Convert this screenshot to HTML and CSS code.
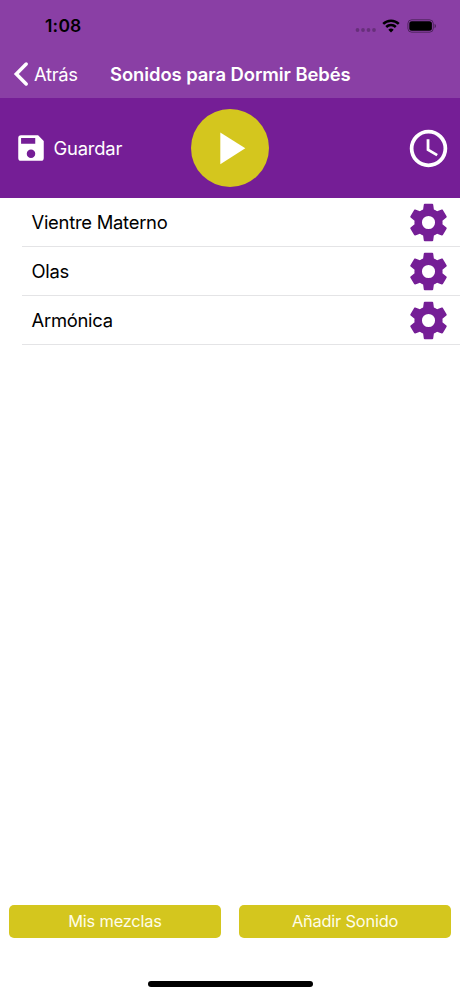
FILE: index.html
```html
<!DOCTYPE html>
<html lang="es">
<head>
<meta charset="utf-8">
<title>Sonidos para Dormir Bebés</title>
<link rel="stylesheet" href="styles.css">
</head>
<body>
<svg width="0" height="0" class="defs" aria-hidden="true">
  <symbol id="gear" viewBox="0 0 24 24"><path d="M12 15.5A3.5 3.5 0 0 1 8.5 12 3.5 3.5 0 0 1 12 8.5a3.5 3.5 0 0 1 3.5 3.5 3.5 3.5 0 0 1-3.5 3.5m7.43-2.53c.04-.32.07-.64.07-.97s-.03-.66-.07-1l2.11-1.63c.19-.15.24-.42.12-.64l-2-3.46c-.12-.22-.39-.31-.61-.22l-2.49 1c-.52-.39-1.06-.73-1.69-.98l-.37-2.65A.506.506 0 0 0 14 2h-4c-.25 0-.46.18-.5.42l-.37 2.65c-.63.25-1.17.59-1.69.98l-2.49-1c-.22-.09-.49 0-.61.22l-2 3.46c-.13.22-.07.49.12.64L4.57 11c-.04.34-.07.67-.07 1s.03.65.07.97l-2.11 1.66c-.19.15-.25.42-.12.64l2 3.46c.12.22.39.3.61.22l2.49-1.01c.52.4 1.06.74 1.69.99l.37 2.65c.04.24.25.42.5.42h4c.25 0 .46-.18.5-.42l.37-2.65c.63-.26 1.17-.59 1.69-.99l2.49 1.01c.22.08.49 0 .61-.22l2-3.46c.12-.22.07-.49-.12-.64z"/></symbol>
</svg>
<div class="screen">
  <header class="top">
    <div class="status">
      <span class="time">1:08</span>
      <span class="indicators">
        <svg class="dots" width="22" height="6" viewBox="0 0 22 6"><circle cx="2.5" cy="3" r="1.9"/><circle cx="8" cy="3" r="1.9"/><circle cx="13.5" cy="3" r="1.9"/><circle cx="19" cy="3" r="1.9"/></svg>
        <svg class="wifi" width="18" height="14" viewBox="0 0 18 14"><path d="M1.2 4.9a11.2 11.2 0 0 1 15.6 0M4.2 8a6.9 6.9 0 0 1 9.6 0" fill="none" stroke="#000" stroke-width="2.5"/><path d="M9 13.4 6.3 10.7a3.9 3.9 0 0 1 5.4 0z"/></svg>
        <svg class="battery" width="30" height="14" viewBox="0 0 30 14"><rect x=".9" y=".8" width="25.4" height="12.4" rx="3.8" fill="none" stroke="#000" stroke-opacity=".42" stroke-width="1"/><rect x="2.3" y="2.2" width="22.6" height="9.6" rx="2.5"/><path d="M27.6 4.8v4.4c1.9-.8 1.9-3.6 0-4.4z" fill-opacity=".45"/></svg>
      </span>
    </div>
    <nav class="nav">
      <svg class="chevron" width="16" height="26" viewBox="0 0 16 26"><path d="M13.2 3 3.3 13l9.9 10" fill="none" stroke="#fff" stroke-width="3.5" stroke-linecap="round"/></svg>
      <span class="back">Atrás</span>
      <h1 class="title">Sonidos para Dormir Bebés</h1>
    </nav>
  </header>
  <section class="player">
    <div class="save">
      <svg width="34" height="34" viewBox="0 0 24 24"><path d="M17 3H5a2 2 0 0 0-2 2v14a2 2 0 0 0 2 2h14a2 2 0 0 0 2-2V7zm-5 16a3 3 0 1 1 0-6 3 3 0 0 1 0 6zm3-10H5V5h10z"/></svg>
      <span class="save-label">Guardar</span>
    </div>
    <div class="play"><svg width="78" height="78" viewBox="0 0 78 78"><path d="M29.3 23.4v31.8l25-15.9z"/></svg></div>
    <svg class="clock" width="45" height="45" viewBox="0 0 24 24"><path d="M12 2a10 10 0 1 0 0 20 10 10 0 0 0 0-20zm0 18a8 8 0 1 1 0-16 8 8 0 0 1 0 16zm.5-13H11v6l5.25 3.15.75-1.23-4.5-2.67z"/></svg>
  </section>
  <main class="list">
    <div class="row"><span class="name">Vientre Materno</span><svg class="gear"><use href="#gear"/></svg></div>
    <div class="row"><span class="name">Olas</span><svg class="gear"><use href="#gear"/></svg></div>
    <div class="row"><span class="name">Armónica</span><svg class="gear"><use href="#gear"/></svg></div>
  </main>
  <footer class="actions">
    <div class="button mixes">Mis mezclas</div>
    <div class="button add">Añadir Sonido</div>
  </footer>
  <div class="home"></div>
</div>
</body>
</html>
```
FILE: styles.css
```css
* { box-sizing: border-box; }
body { margin: 0; font-family: Inter, "Liberation Sans", sans-serif; background: #fff; }
.defs { display: none; }
svg { display: block; flex: none; }
.screen { width: 460px; height: 996px; display: flex; flex-direction: column; overflow: hidden; }
.top { height: 98px; background: #8a3fa5; }
.status { height: 50px; padding: 1px 23px 0 45px; display: flex; align-items: center; justify-content: space-between; }
.time { font-size: 17.5px; font-weight: 600; line-height: 24px; letter-spacing: 0.2px; }
.indicators { display: flex; align-items: center; }
.dots { margin: 9px 5px 0 0; fill: #000; fill-opacity: .25; }
.wifi { margin-right: 7px; }
.nav { height: 48px; padding-left: 13px; display: flex; align-items: center; color: #fff; }
.back { width: 76px; margin-left: 5px; font-size: 18.4px; line-height: 24px; letter-spacing: -0.35px; }
.title { margin: 0; font-size: 18.4px; font-weight: 600; line-height: 24px; letter-spacing: -0.05px; white-space: nowrap; }
.player { height: 100px; padding: 0 9px 0 14px; background: #751e96; color: #fff; fill: #fff; display: flex; align-items: center; }
.save { width: 177px; display: flex; align-items: center; }
.save-label { margin-left: 5.5px; font-size: 18.4px; line-height: 24px; letter-spacing: -0.2px; }
.play { width: 78px; height: 78px; border-radius: 50%; background: #d4c61e; }
.clock { margin-left: auto; }
.list { flex: 1; padding-left: 22px; }
.row { height: 49px; padding: 0 9px 0 9.5px; border-bottom: 1px solid #e4e4e6; display: flex; align-items: center; justify-content: space-between; }
.name { font-size: 18.4px; line-height: 24px; letter-spacing: -0.26px; color: #000; }
.gear { width: 45px; height: 45px; fill: #751e96; }
.actions { height: 33px; margin: 0 9px; display: grid; grid-template-columns: 1fr 1fr; gap: 18px; }
.button { height: 33px; border-radius: 5px; background: #d4c61e; color: #fffde9; font-size: 16.4px; line-height: 33px; letter-spacing: -0.2px; text-align: center; }
.home { width: 165px; height: 6px; margin: 43px auto 9px; border-radius: 3px; background: #000; }
```
